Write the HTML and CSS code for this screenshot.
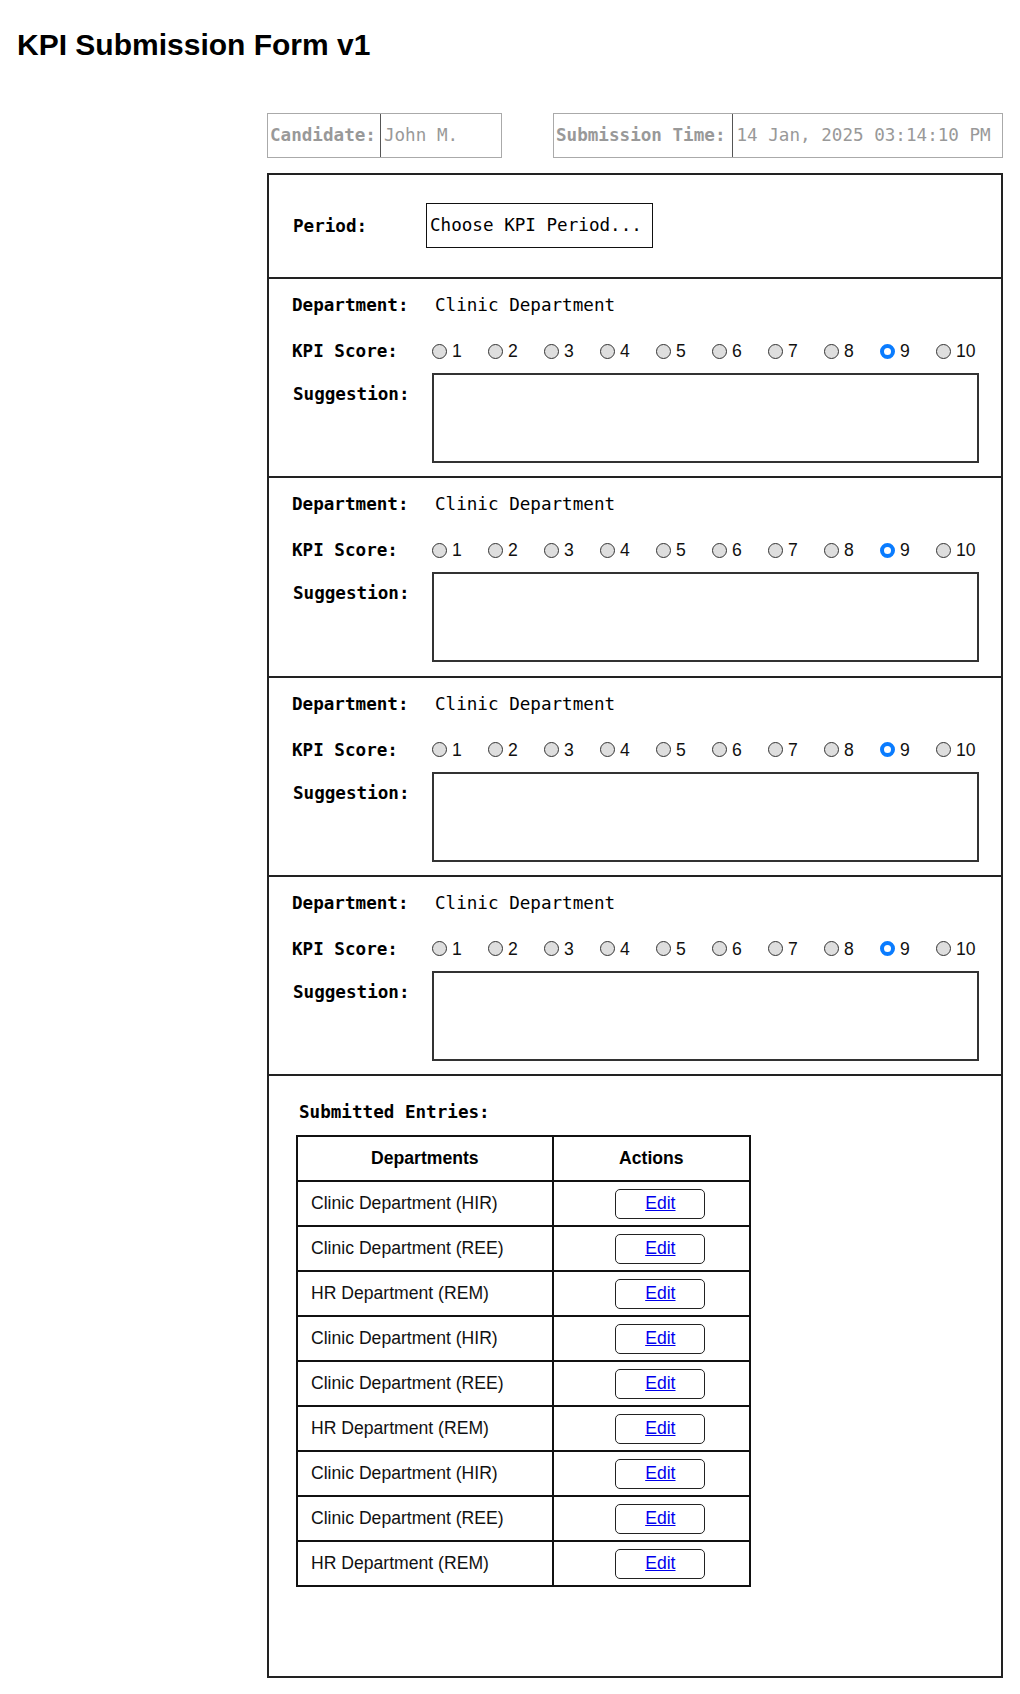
FILE: index.html
```html
<!DOCTYPE html>
<html lang="en">
<head>
<meta charset="utf-8">
<title>KPI Submission Form v1</title>
<link rel="stylesheet" href="styles.css">
</head>
<body>
<h1 class="title">KPI Submission Form v1</h1>
<div class="page">
  <div class="sheet">
    <div class="meta">
      <div class="meta-box candidate"><span class="meta-label">Candidate:</span><span class="meta-value">John M.</span></div>
      <div class="meta-box time"><span class="meta-label">Submission Time:</span><span class="meta-value">14 Jan, 2025 03:14:10 PM</span></div>
    </div>

    <div class="form">
      <div class="period">
        <span class="label period-label">Period:</span>
        <div class="select">Choose KPI Period...</div>
      </div>

      <div class="section">
        <div class="field"><span class="label">Department:</span><span class="value">Clinic Department</span></div>
        <div class="field score-row"><span class="label">KPI Score:</span>
          <div class="radios">
            <label class="opt"><input type="radio" name="s1">1</label>
            <label class="opt"><input type="radio" name="s1">2</label>
            <label class="opt"><input type="radio" name="s1">3</label>
            <label class="opt"><input type="radio" name="s1">4</label>
            <label class="opt"><input type="radio" name="s1">5</label>
            <label class="opt"><input type="radio" name="s1">6</label>
            <label class="opt"><input type="radio" name="s1">7</label>
            <label class="opt"><input type="radio" name="s1">8</label>
            <label class="opt"><input type="radio" name="s1" checked>9</label>
            <label class="opt"><input type="radio" name="s1">10</label>
          </div>
        </div>
        <div class="field field-top"><span class="label label-sugg">Suggestion:</span><textarea class="sugg"></textarea></div>
      </div>

      <div class="section">
        <div class="field"><span class="label">Department:</span><span class="value">Clinic Department</span></div>
        <div class="field score-row"><span class="label">KPI Score:</span>
          <div class="radios">
            <label class="opt"><input type="radio" name="s2">1</label>
            <label class="opt"><input type="radio" name="s2">2</label>
            <label class="opt"><input type="radio" name="s2">3</label>
            <label class="opt"><input type="radio" name="s2">4</label>
            <label class="opt"><input type="radio" name="s2">5</label>
            <label class="opt"><input type="radio" name="s2">6</label>
            <label class="opt"><input type="radio" name="s2">7</label>
            <label class="opt"><input type="radio" name="s2">8</label>
            <label class="opt"><input type="radio" name="s2" checked>9</label>
            <label class="opt"><input type="radio" name="s2">10</label>
          </div>
        </div>
        <div class="field field-top"><span class="label label-sugg">Suggestion:</span><textarea class="sugg"></textarea></div>
      </div>

      <div class="section">
        <div class="field"><span class="label">Department:</span><span class="value">Clinic Department</span></div>
        <div class="field score-row"><span class="label">KPI Score:</span>
          <div class="radios">
            <label class="opt"><input type="radio" name="s3">1</label>
            <label class="opt"><input type="radio" name="s3">2</label>
            <label class="opt"><input type="radio" name="s3">3</label>
            <label class="opt"><input type="radio" name="s3">4</label>
            <label class="opt"><input type="radio" name="s3">5</label>
            <label class="opt"><input type="radio" name="s3">6</label>
            <label class="opt"><input type="radio" name="s3">7</label>
            <label class="opt"><input type="radio" name="s3">8</label>
            <label class="opt"><input type="radio" name="s3" checked>9</label>
            <label class="opt"><input type="radio" name="s3">10</label>
          </div>
        </div>
        <div class="field field-top"><span class="label label-sugg">Suggestion:</span><textarea class="sugg"></textarea></div>
      </div>

      <div class="section">
        <div class="field"><span class="label">Department:</span><span class="value">Clinic Department</span></div>
        <div class="field score-row"><span class="label">KPI Score:</span>
          <div class="radios">
            <label class="opt"><input type="radio" name="s4">1</label>
            <label class="opt"><input type="radio" name="s4">2</label>
            <label class="opt"><input type="radio" name="s4">3</label>
            <label class="opt"><input type="radio" name="s4">4</label>
            <label class="opt"><input type="radio" name="s4">5</label>
            <label class="opt"><input type="radio" name="s4">6</label>
            <label class="opt"><input type="radio" name="s4">7</label>
            <label class="opt"><input type="radio" name="s4">8</label>
            <label class="opt"><input type="radio" name="s4" checked>9</label>
            <label class="opt"><input type="radio" name="s4">10</label>
          </div>
        </div>
        <div class="field field-top"><span class="label label-sugg">Suggestion:</span><textarea class="sugg"></textarea></div>
      </div>

      <div class="entries">
        <div class="entries-title">Submitted Entries:</div>
        <table class="table">
          <thead>
            <tr><th class="col-dept">Departments</th><th class="col-act">Actions</th></tr>
          </thead>
          <tbody>
            <tr><td>Clinic Department (HIR)</td><td class="act"><span class="btn"><a href="#">Edit</a></span></td></tr>
            <tr><td>Clinic Department (REE)</td><td class="act"><span class="btn"><a href="#">Edit</a></span></td></tr>
            <tr><td>HR Department (REM)</td><td class="act"><span class="btn"><a href="#">Edit</a></span></td></tr>
            <tr><td>Clinic Department (HIR)</td><td class="act"><span class="btn"><a href="#">Edit</a></span></td></tr>
            <tr><td>Clinic Department (REE)</td><td class="act"><span class="btn"><a href="#">Edit</a></span></td></tr>
            <tr><td>HR Department (REM)</td><td class="act"><span class="btn"><a href="#">Edit</a></span></td></tr>
            <tr><td>Clinic Department (HIR)</td><td class="act"><span class="btn"><a href="#">Edit</a></span></td></tr>
            <tr><td>Clinic Department (REE)</td><td class="act"><span class="btn"><a href="#">Edit</a></span></td></tr>
            <tr><td>HR Department (REM)</td><td class="act"><span class="btn"><a href="#">Edit</a></span></td></tr>
          </tbody>
        </table>
      </div>
    </div>
  </div>
</div>
</body>
</html>
```

FILE: styles.css
```css
html, body {
  margin: 0;
  padding: 0;
  background: #fff;
}

body {
  font-family: "DejaVu Sans Mono", monospace;
  font-size: 17.6px;
  color: #000;
}

.title {
  font-family: "Liberation Sans", Arial, sans-serif;
  font-size: 30px;
  font-weight: bold;
  line-height: 34px;
  margin: 28px 0 0 17px;
}

.page {
  display: flex;
  justify-content: flex-end;
  padding: 0 17px 16px 17px;
}

.sheet {
  width: 736px;
}

/* meta boxes */
.meta {
  margin-top: 51px;
  display: flex;
  justify-content: space-between;
}

.meta-box {
  display: flex;
  height: 45px;
  box-sizing: border-box;
  border: 1.5px solid #aaa;
  color: #999;
  line-height: 42px;
}

.meta-box.candidate { width: 235px; }
.meta-box.time { width: 450px; }

.meta-label {
  font-weight: bold;
  padding: 0 4px 0 2px;
  border-right: 1px solid #555;
}

.meta-box.time .meta-label {
  padding-right: 7px;
}

.meta-value {
  padding-left: 3px;
}

/* form */
.form {
  margin-top: 15px;
  border: 2px solid #222;
}

.label {
  font-weight: bold;
  width: 140px;
  flex: none;
  line-height: 24px;
}

.period {
  display: flex;
  align-items: center;
  padding: 28px 24px 29px 24px;
  border-bottom: 2px solid #222;
}

.period-label {
  width: 133px;
}

.select {
  width: 227px;
  height: 45px;
  box-sizing: border-box;
  border: 1.5px solid #111;
  padding-left: 3px;
  line-height: 42px;
  white-space: nowrap;
}

.section {
  padding: 14px 22px 13.25px 23px;
  border-bottom: 2px solid #222;
}

.field {
  display: flex;
  align-items: center;
  line-height: 24px;
}

.score-row {
  margin-top: 22px;
}

.field-top {
  align-items: flex-start;
  margin-top: 10px;
}

.label-sugg {
  padding-top: 9px;
  padding-left: 1px;
  width: 139px;
}

.value {
  padding-left: 3px;
}

.radios {
  display: flex;
}

.opt {
  display: inline-flex;
  align-items: center;
  width: 56px;
  font-family: "Liberation Sans", Arial, sans-serif;
  font-size: 17.6px;
  color: #111;
}

.opt input {
  -webkit-appearance: none;
  appearance: none;
  margin: 0 5px 0 0;
  width: 15px;
  height: 15px;
  box-sizing: border-box;
  border: 1.5px solid #333;
  border-radius: 50%;
  background: #dedede;
}

.opt input:checked {
  border: 4px solid #0a7cff;
  background: #fff;
}

.sugg {
  display: block;
  width: 547px;
  height: 90px;
  box-sizing: border-box;
  border: 2px solid #333;
  margin: 0;
  padding: 4px;
  resize: none;
  font-family: "DejaVu Sans Mono", monospace;
}

/* entries */
.entries {
  padding: 24px 0 89px 27px;
}

.entries-title {
  font-weight: bold;
  line-height: 24px;
  padding-left: 3px;
  margin-bottom: 11px;
}

.table {
  border-collapse: collapse;
  width: 455px;
  border: 2px solid #111;
  font-family: "Liberation Sans", Arial, sans-serif;
  font-size: 17.6px;
}

.table th,
.table td {
  border: 2px solid #111;
  height: 45px;
  padding: 0;
  box-sizing: border-box;
}

.table th {
  text-align: center;
  font-weight: bold;
}

.col-dept { width: 257px; }
.col-act { width: 198px; }

.table td {
  padding-left: 13px;
  color: #111;
}

.table td.act {
  text-align: center;
  padding-left: 18px;
}

.btn {
  display: inline-block;
  width: 90px;
  height: 30px;
  box-sizing: border-box;
  border: 1.5px solid #222;
  border-radius: 5px;
  line-height: 27px;
  vertical-align: middle;
}

.btn a {
  color: #0000ee;
  text-decoration: underline;
}
```
